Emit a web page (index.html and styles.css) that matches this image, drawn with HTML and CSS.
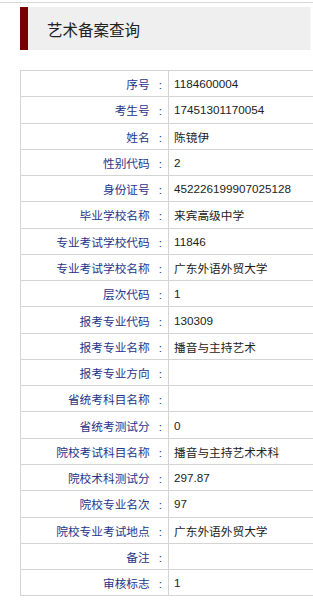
FILE: index.html
```html
<!DOCTYPE html>
<html lang="zh">
<head>
<meta charset="utf-8">
<title>艺术备案查询</title>
<link rel="stylesheet" href="styles.css">
</head>
<body>
<div class="topline"></div>
<div class="page">
  <div class="title-bar"><h1 class="title">艺术备案查询</h1></div>
  <div class="table-wrap">
    <table class="info">
      <tbody>
        <tr><td class="lbl">序号<span class="colon">:</span></td><td class="val">1184600004</td></tr>
        <tr><td class="lbl">考生号<span class="colon">:</span></td><td class="val">17451301170054</td></tr>
        <tr><td class="lbl">姓名<span class="colon">:</span></td><td class="val">陈镜伊</td></tr>
        <tr><td class="lbl">性别代码<span class="colon">:</span></td><td class="val">2</td></tr>
        <tr><td class="lbl">身份证号<span class="colon">:</span></td><td class="val">452226199907025128</td></tr>
        <tr><td class="lbl">毕业学校名称<span class="colon">:</span></td><td class="val">来宾高级中学</td></tr>
        <tr><td class="lbl">专业考试学校代码<span class="colon">:</span></td><td class="val">11846</td></tr>
        <tr><td class="lbl">专业考试学校名称<span class="colon">:</span></td><td class="val">广东外语外贸大学</td></tr>
        <tr><td class="lbl">层次代码<span class="colon">:</span></td><td class="val">1</td></tr>
        <tr><td class="lbl">报考专业代码<span class="colon">:</span></td><td class="val">130309</td></tr>
        <tr><td class="lbl">报考专业名称<span class="colon">:</span></td><td class="val">播音与主持艺术</td></tr>
        <tr><td class="lbl">报考专业方向<span class="colon">:</span></td><td class="val"></td></tr>
        <tr><td class="lbl">省统考科目名称<span class="colon">:</span></td><td class="val"></td></tr>
        <tr><td class="lbl">省统考测试分<span class="colon">:</span></td><td class="val">0</td></tr>
        <tr><td class="lbl">院校考试科目名称<span class="colon">:</span></td><td class="val">播音与主持艺术术科</td></tr>
        <tr><td class="lbl">院校术科测试分<span class="colon">:</span></td><td class="val">297.87</td></tr>
        <tr><td class="lbl">院校专业名次<span class="colon">:</span></td><td class="val">97</td></tr>
        <tr><td class="lbl">院校专业考试地点<span class="colon">:</span></td><td class="val">广东外语外贸大学</td></tr>
        <tr><td class="lbl">备注<span class="colon">:</span></td><td class="val"></td></tr>
        <tr><td class="lbl">审核标志<span class="colon">:</span></td><td class="val">1</td></tr>
      </tbody>
    </table>
  </div>
</div>
</body>
</html>
```
FILE: styles.css
```css
html, body {
  margin: 0;
  padding: 0;
  background: #ffffff;
  overflow: hidden;
}
body {
  font-family: "Liberation Sans", "Noto Sans CJK SC", sans-serif;
  font-size: 11.7px;
  color: #222222;
}
.topline {
  height: 2px;
  border-bottom: 1px solid #d9d9d9;
}
.page {
  padding: 4px 2px 0 20px;
}
.title-bar {
  height: 43px;
  background: #efefef;
  border-left: 8px solid #780000;
  border-right: 1px solid #f6f6f6;
  display: flex;
  align-items: center;
  padding-left: 19px;
}
.title {
  margin: 0;
  font-size: 15.5px;
  font-weight: normal;
  color: #222222;
  font-family: "Noto Sans CJK SC", sans-serif;
}
.table-wrap {
  margin-top: 20px;
  margin-right: -2px;
  overflow: hidden;
}
.info {
  border-collapse: collapse;
  width: calc(100% + 10px);
}
.info td {
  border: 1px solid #d4d4d4;
  height: 25.27px;
  padding: 0 5px;
  vertical-align: middle;
  white-space: nowrap;
}
.info td.lbl {
  width: 136px;
  text-align: right;
  color: #25358a;
  padding-right: 6px;
}
.colon {
  display: inline-block;
  margin-left: 9px;
  color: #25358a;
}
.info td.val {
  text-align: left;
  color: #222222;
}
```
